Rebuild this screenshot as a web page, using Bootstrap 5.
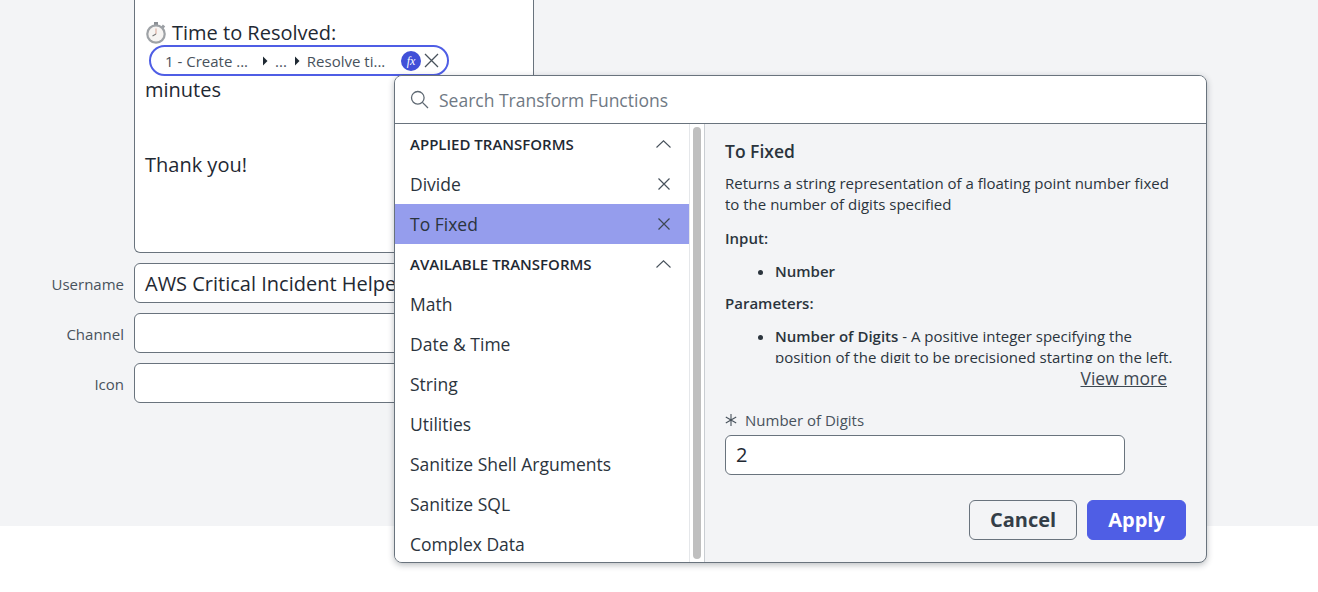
<!DOCTYPE html>
<html lang="en">
<head>
    <meta charset="UTF-8">
    <meta name="viewport" content="width=device-width, initial-scale=1.0">
    <title>Transform Functions</title>
    <link href="https://cdn.jsdelivr.net/npm/bootstrap@5.3.0/dist/css/bootstrap.min.css" rel="stylesheet">
    <style>
        html, body {
            height: 592px;
            overflow: hidden;
        }
        body {
            background: #fff;
            font-family: "Open Sans", sans-serif;
            color: #1f2933;
        }
        .page-area {
            position: relative;
            height: 526px;
            background: #f3f4f6;
            padding-left: 48px;
        }
        .form-wrap {
            width: 486px;
        }
        .editor-box {
            margin-left: 86px;
            margin-bottom: 10px;
            width: 400px;
            height: 253px;
            background: #fff;
            border: 1px solid #69737d;
            border-top: 0;
            border-radius: 0 0 6px 6px;
            padding: 18px 10px 0 10px;
            font-size: 20px;
            line-height: 30px;
        }
        .editor-line {
            height: 30px;
            white-space: nowrap;
        }
        .time-line {
            gap: 5px;
        }
        .minutes-line {
            margin-top: -1px;
        }
        .thanks-line {
            margin-top: 15px;
        }
        .pill-token {
            width: 300px;
            height: 31px;
            margin: -3px 0 0 4px;
            border: 2px solid #4f5ee5;
            border-radius: 16px;
            background: #fff;
            padding: 1px 8px 0 14px;
            font-size: 15px;
            color: #48525c;
            white-space: nowrap;
        }
        .pill-arrow-first {
            margin-left: 14px;
        }
        .pill-gap {
            margin-left: 7px;
        }
        .pill-fx {
            width: 20px;
            height: 20px;
            margin-top: -1px;
            border-radius: 50%;
            background: #4150d8;
            color: #fff;
            font-family: "Liberation Serif", serif;
            font-style: italic;
            font-size: 12px;
            line-height: 20px;
            text-align: center;
        }
        .pill-close {
            margin-left: 3px;
            margin-top: -1px;
        }
        .field-row {
            height: 40px;
            margin-bottom: 10px;
        }
        .field-label {
            width: 76px;
            margin-right: 10px;
            padding-top: 2px;
            text-align: right;
            font-size: 15px;
            color: #48525c;
        }
        .field-input {
            width: 400px;
            height: 40px;
            background: #fff;
            border: 1px solid #69737d;
            border-radius: 6px;
            padding: 1px 10px 0 10px;
            font-size: 20px;
            line-height: 38px;
            white-space: nowrap;
            overflow: hidden;
        }
        .transform-pop {
            position: absolute;
            left: 394px;
            top: 75px;
            width: 813px;
            height: 488px;
            background: #f3f4f6;
            border: 1px solid #69737d;
            border-radius: 8px;
            box-shadow: 0 2px 6px rgba(31, 41, 51, .3);
            overflow: hidden;
        }
        .search-head {
            height: 48px;
            background: #fff;
            border-bottom: 1px solid #69737d;
            padding-left: 15px;
            gap: 10px;
            font-size: 17.5px;
            color: #6f7984;
        }
        .search-head span {
            padding-top: 2px;
        }
        .pop-body {
            height: 439px;
        }
        .list-side {
            width: 294px;
            background: #fff;
            overflow: hidden;
        }
        .list-head {
            height: 40px;
            padding: 0 18px 0 15px;
            font-size: 15px;
            font-weight: 600;
            color: #1f2933;
        }
        .list-entry {
            height: 40px;
            padding: 0 19px 0 15px;
            font-size: 17.5px;
            color: #2b343d;
        }
        .list-entry.is-picked {
            background: #959ded;
        }
        .scroll-side {
            width: 16px;
            background: #fff;
            border-left: 1px solid #e5e7ea;
            border-right: 1px solid #c9cdd2;
            padding: 3px 3px 4px 3px;
        }
        .scroll-thumb {
            height: 100%;
            background: #bfbfbf;
            border-radius: 4px;
        }
        .detail-side {
            flex: 1;
            padding: 15px 20px 0 20px;
            min-width: 0;
        }
        .detail-title {
            font-size: 17.5px;
            font-weight: 600;
            line-height: 24px;
            margin-bottom: 10px;
            color: #2b343d;
        }
        .detail-scroll {
            height: 190px;
            overflow: hidden;
            padding-right: 10px;
            font-size: 15px;
            line-height: 21px;
            color: #2b343d;
        }
        .detail-scroll p {
            margin-bottom: 12px;
        }
        .detail-scroll .desc-text {
            margin-bottom: 13px;
        }
        .detail-scroll ul {
            margin-bottom: 12px;
            padding-left: 50px;
        }
        .detail-scroll .input-list {
            margin-bottom: 11px;
        }
        .view-more {
            width: 442px;
            text-align: right;
            font-size: 17.5px;
            line-height: 24px;
            color: #3d4852;
            text-decoration: underline;
            margin-top: 3px;
        }
        .digits-label {
            margin-top: 18px;
            height: 24px;
            font-size: 15px;
            color: #48525c;
            gap: 8px;
        }
        .digits-input {
            width: 400px;
            height: 40px;
            margin-top: 3px;
            background: #fff;
            border: 1px solid #69737d;
            border-radius: 6px;
            padding: 0 10px;
            font-size: 20px;
            line-height: 38px;
        }
        .btn-row {
            margin-top: 25px;
            width: 461px;
            gap: 10px;
        }
        .btn-cancel, .btn-apply {
            height: 40px;
            border-radius: 6px;
            font-size: 20px;
            font-weight: 700;
            line-height: 1;
            padding: 0;
        }
        .btn-cancel {
            width: 108px;
            background: transparent;
            border: 1px solid #69737d;
            color: #343e48;
        }
        .btn-apply {
            width: 99px;
            background: #4f5ee5;
            border: 1px solid #4f5ee5;
            color: #fff;
        }
    </style>
</head>
<body>
<div class="page-area">
    <div class="form-wrap">
        <div class="editor-box">
            <div class="editor-line time-line d-flex align-items-center">
                <svg width="22" height="24" viewBox="0 0 22 24" aria-hidden="true">
                    <rect x="9" y="1" width="4" height="3" fill="#8b8f94"/>
                    <rect x="17" y="4" width="3" height="3" fill="#9a9ea3" transform="rotate(40 18 5)"/>
                    <circle cx="11" cy="13" r="9.8" fill="#9ea2a6"/>
                    <circle cx="11" cy="13" r="7.6" fill="#f6f4f2"/>
                    <path d="M11 13 L11 7.5" stroke="#d9a99c" stroke-width="1.1"/>
                    <path d="M11 13 L7.5 15" stroke="#777" stroke-width="1.1"/>
                </svg>
                <span>Time to Resolved:</span>
            </div>
            <div class="pill-token d-flex align-items-center">
                <span>1 - Create ...</span>
                <svg class="pill-arrow-first" width="6" height="10" viewBox="0 0 6 10" aria-hidden="true"><path d="M1 0.5 L5.5 5 L1 9.5 Z" fill="#1f2933"/></svg>
                <span class="pill-gap">...</span>
                <svg class="pill-gap" width="6" height="10" viewBox="0 0 6 10" aria-hidden="true"><path d="M1 0.5 L5.5 5 L1 9.5 Z" fill="#1f2933"/></svg>
                <span class="pill-gap">Resolve ti...</span>
                <span class="pill-fx ms-auto flex-shrink-0">fx</span>
                <svg class="pill-close flex-shrink-0" width="15" height="15" viewBox="0 0 15 15" aria-hidden="true"><path d="M1 1 L14 14 M14 1 L1 14" stroke="#48525c" stroke-width="1.3"/></svg>
            </div>
            <div class="editor-line minutes-line">minutes</div>
            <div class="editor-line"></div>
            <div class="editor-line thanks-line">Thank you!</div>
        </div>
        <div class="field-row d-flex align-items-center">
            <label class="field-label">Username</label>
            <div class="field-input">AWS Critical Incident Helper</div>
        </div>
        <div class="field-row d-flex align-items-center">
            <label class="field-label">Channel</label>
            <div class="field-input"></div>
        </div>
        <div class="field-row d-flex align-items-center">
            <label class="field-label">Icon</label>
            <div class="field-input"></div>
        </div>
    </div>

    <div class="transform-pop">
        <div class="search-head d-flex align-items-center">
            <svg width="19" height="19" viewBox="0 0 19 19" fill="none" stroke="#5f6973" stroke-width="1.3" aria-hidden="true">
                <circle cx="7.8" cy="7.8" r="6.3"/>
                <path d="M12.4 12.4 L18 18"/>
            </svg>
            <span>Search Transform Functions</span>
        </div>
        <div class="pop-body d-flex">
            <div class="list-side">
                <div class="list-head d-flex align-items-center justify-content-between">
                    <span>APPLIED TRANSFORMS</span>
                    <svg width="15" height="8" viewBox="0 0 15 8" fill="none" stroke="#48525c" stroke-width="1.1" aria-hidden="true"><path d="M0.5 7.5 L7.5 0.8 L14.5 7.5"/></svg>
                </div>
                <div class="list-entry d-flex align-items-center justify-content-between">
                    <span>Divide</span>
                    <svg width="12" height="12" viewBox="0 0 12 12" aria-hidden="true"><path d="M.5 .5 L11.5 11.5 M11.5 .5 L.5 11.5" stroke="#48525c" stroke-width="1.2"/></svg>
                </div>
                <div class="list-entry is-picked d-flex align-items-center justify-content-between">
                    <span>To Fixed</span>
                    <svg width="12" height="12" viewBox="0 0 12 12" aria-hidden="true"><path d="M.5 .5 L11.5 11.5 M11.5 .5 L.5 11.5" stroke="#3d4852" stroke-width="1.2"/></svg>
                </div>
                <div class="list-head d-flex align-items-center justify-content-between">
                    <span>AVAILABLE TRANSFORMS</span>
                    <svg width="15" height="8" viewBox="0 0 15 8" fill="none" stroke="#48525c" stroke-width="1.1" aria-hidden="true"><path d="M0.5 7.5 L7.5 0.8 L14.5 7.5"/></svg>
                </div>
                <div class="list-entry d-flex align-items-center">Math</div>
                <div class="list-entry d-flex align-items-center">Date &amp; Time</div>
                <div class="list-entry d-flex align-items-center">String</div>
                <div class="list-entry d-flex align-items-center">Utilities</div>
                <div class="list-entry d-flex align-items-center">Sanitize Shell Arguments</div>
                <div class="list-entry d-flex align-items-center">Sanitize SQL</div>
                <div class="list-entry d-flex align-items-center">Complex Data</div>
            </div>
            <div class="scroll-side">
                <div class="scroll-thumb"></div>
            </div>
            <div class="detail-side">
                <div class="detail-title">To Fixed</div>
                <div class="detail-scroll">
                    <p class="desc-text">Returns a string representation of a floating point number fixed to the number of digits specified</p>
                    <p><strong class="fw-semibold">Input:</strong></p>
                    <ul class="input-list"><li><strong class="fw-semibold">Number</strong></li></ul>
                    <p><strong class="fw-semibold">Parameters:</strong></p>
                    <ul><li><strong class="fw-semibold">Number of Digits</strong> - A positive integer specifying the position of the digit to be precisioned starting on the left.</li></ul>
                </div>
                <div class="view-more">View more</div>
                <div class="digits-label d-flex align-items-center">
                    <svg width="12" height="12" viewBox="0 0 12 12" stroke="#48525c" stroke-width="1.1" aria-hidden="true"><path d="M6 0 V12 M.8 3 L11.2 9 M11.2 3 L.8 9"/></svg>
                    <span>Number of Digits</span>
                </div>
                <div class="digits-input">2</div>
                <div class="btn-row d-flex justify-content-end">
                    <button type="button" class="btn btn-cancel">Cancel</button>
                    <button type="button" class="btn btn-apply">Apply</button>
                </div>
            </div>
        </div>
    </div>
</div>
<script src="https://cdn.jsdelivr.net/npm/bootstrap@5.3.0/dist/js/bootstrap.bundle.min.js"></script>
</body>
</html>
